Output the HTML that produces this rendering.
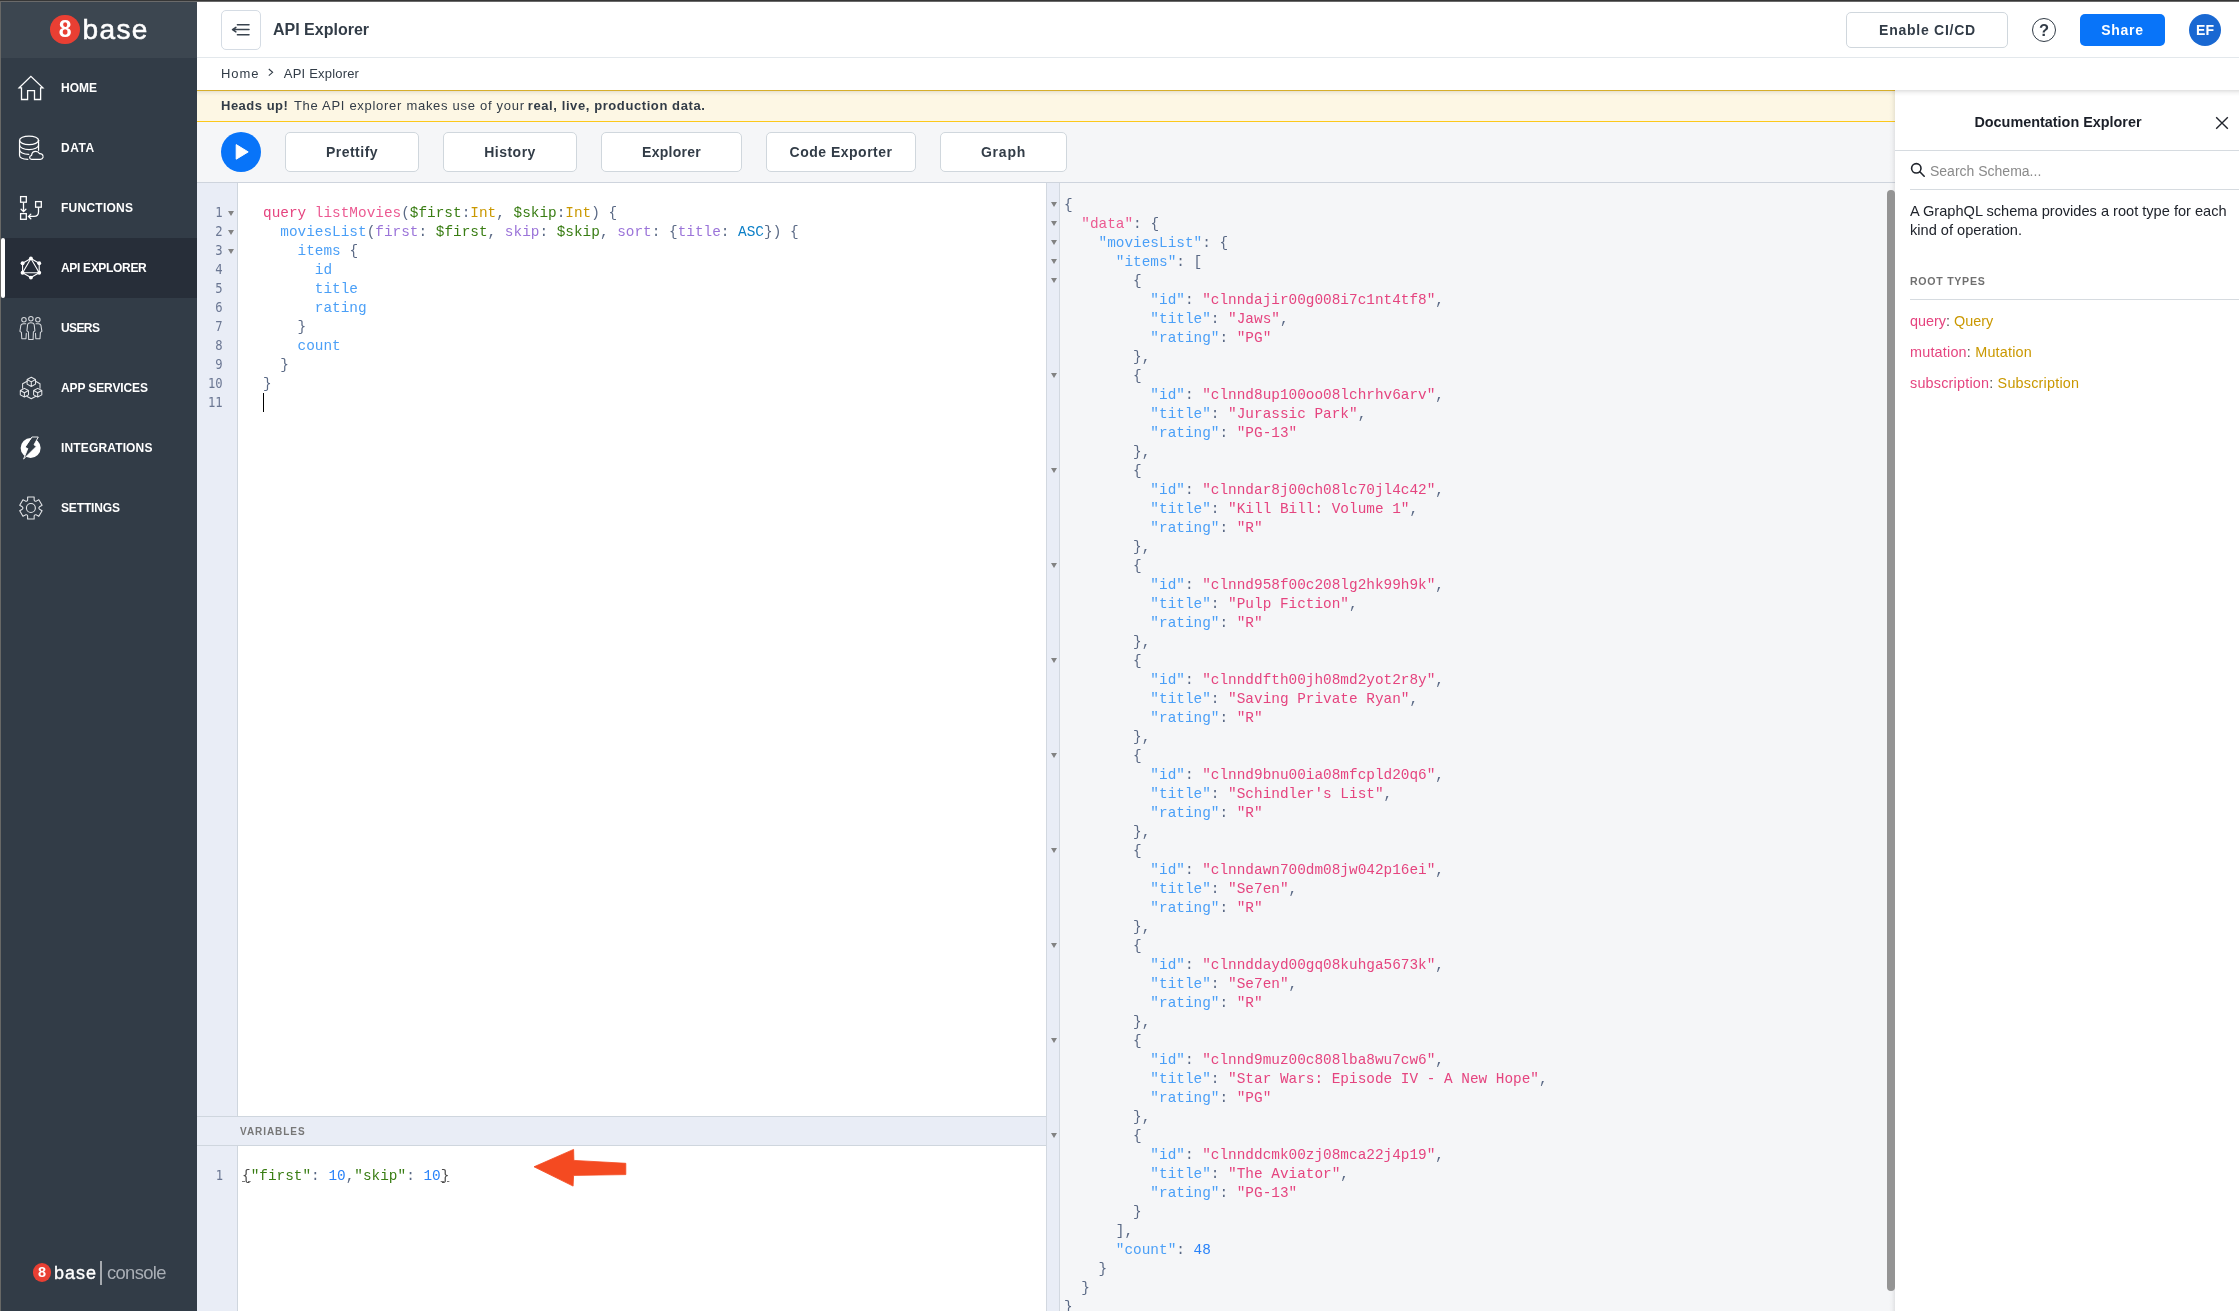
<!DOCTYPE html>
<html lang="en">
<head>
<meta charset="utf-8">
<title>8base Console - API Explorer</title>
<style>
*{box-sizing:border-box;margin:0;padding:0}
html,body{width:2239px;height:1311px;overflow:hidden;background:#fff}
body{position:relative;font-family:"Liberation Sans",sans-serif;color:#323c47;-webkit-font-smoothing:antialiased;will-change:transform}
.abs{position:absolute}
/* window chrome strips */
#topstrip1{left:0;top:0;width:2239px;height:1px;background:#363636;z-index:50}
#topstrip2{left:0;top:1px;width:2239px;height:1px;background:#6a6a6a;z-index:50}
#leftstrip{left:0;top:1px;width:1px;height:1310px;background:#686866;z-index:50}

/* ---------- sidebar ---------- */
#sidebar{left:0;top:0;width:197px;height:1311px;background:#323c47}
#sb-head{left:0;top:0;width:197px;height:58px;background:#3c4650}
.logo-c{border-radius:50%;background:#e93f33;color:#fff;text-align:center;font-weight:bold}
.nav{left:0;width:197px;height:60px}
.nav.active{background:#272e39}
.nav.active:before{content:"";position:absolute;left:1px;top:0;width:4px;height:60px;background:#fff;border-radius:2.5px}
.nav svg{position:absolute;left:18px;top:17px;width:26px;height:26px;overflow:visible}
.nav span{position:absolute;left:61px;top:22px;font-size:12px;line-height:16px;font-weight:bold;color:#fff;white-space:nowrap}

/* ---------- header ---------- */
#header{left:197px;top:0;width:2042px;height:58px;background:#fff;border-bottom:1px solid #e3e8ec}
#toggle{left:24px;top:10px;width:40px;height:40px;border:1px solid #d5dce4;border-radius:5px;background:#fff}
#title{left:76px;top:20px;font-size:16px;line-height:20px;font-weight:bold;color:#323c47;white-space:nowrap}
#cicd{left:1649px;top:12px;width:162px;height:36px;border:1px solid #d0d7dd;border-radius:5px;background:#fff;text-align:center;font-size:14px;line-height:34px;font-weight:bold;color:#323c47;letter-spacing:.75px;padding-left:1px}
#help{left:1835px;top:18px;width:24px;height:24px;border:1.4px solid #323c47;border-radius:50%;text-align:center;font-size:16.5px;line-height:22.6px;font-weight:bold;color:#323c47}
#share{left:1883px;top:14px;width:85px;height:32px;border-radius:5px;background:#0874f9;text-align:center;font-size:14px;line-height:33px;font-weight:bold;color:#fff;letter-spacing:.7px}
#avatar{left:1992px;top:14px;width:32px;height:32px;border-radius:50%;background:#1968d2;text-align:center;font-size:14px;line-height:33px;font-weight:bold;color:#fff}
#crumbs{left:221px;top:65px;font-size:13px;line-height:18px;color:#323c47;white-space:nowrap}
#c1{letter-spacing:.9px}#c3{letter-spacing:.2px}#c2{display:inline-block;width:24.5px;height:10px;position:relative}

/* ---------- banner ---------- */
#banner{left:197px;top:90px;width:1698px;height:32px;background:#fdf7e4;border-top:1px solid #f0c330;border-bottom:1px solid #fcc81b;font-size:13px;line-height:30px;padding-left:24px;color:#323c47;white-space:nowrap}
#banner b{font-weight:bold}
#banner>*{position:absolute;top:0}
#b1{left:24px;letter-spacing:.5px}#b2{left:96.9px;letter-spacing:.71px}#b3{left:330.8px;letter-spacing:.59px}

/* ---------- toolbar ---------- */
#toolbar{left:197px;top:122px;width:1698px;height:61px;background:#f5f6f8;border-bottom:1px solid #ced4dd}
#play{left:24px;top:10px;width:40px;height:40px;border-radius:50%;background:#0874f9}
.tbtn{top:10px;height:40px;border:1px solid #d0d7dd;border-radius:5px;background:#fff;text-align:center;font-size:14px;line-height:38px;font-weight:bold;color:#323c47;letter-spacing:.5px}

/* ---------- editors ---------- */
.code{font-family:"Liberation Mono",monospace;font-size:14.4px;line-height:19px;color:#555}
.ln{height:19px;white-space:pre}
#qgutter{left:197px;top:183px;width:41px;height:933px;background:#e9edf6;border-right:1px solid #cfd6de}
#qedit{left:238px;top:183px;width:808px;height:933px;background:#fff}
.gn{height:19px;font-family:"DejaVu Sans Mono","Liberation Mono",monospace;font-size:13.4px;line-height:19px;color:#6b7793;text-align:right;transform:scaleX(.91);transform-origin:100% 50%}
.fold{position:absolute;left:0;width:0;height:0;border-left:3.1px solid transparent;border-right:3.1px solid transparent;border-top:5.6px solid #828282}
#varhead{left:197px;top:1116px;width:849px;height:30px;background:#e9edf6;border-top:1px solid #cfd6de;border-bottom:1px solid #cfd6de}
#varhead span{position:absolute;left:43px;top:7.6px;font-size:10px;line-height:14px;font-weight:bold;letter-spacing:.95px;color:#777}
#vgutter{left:197px;top:1146px;width:41px;height:165px;background:#e9edf6;border-right:1px solid #cfd6de}
#vedit{left:238px;top:1146px;width:808px;height:165px;background:#fff}
#result{left:1046px;top:183px;width:849px;height:1128px;background:#f5f6f8}
#rgutter{left:0;top:0;width:14px;height:1128px;background:#e9edf6;border-left:1px solid #d2d8e0;border-right:1px solid #d2d8e0}
#scroll{left:1887px;top:190px;width:8px;height:1101px;border-radius:4px;background:#949494;z-index:5}
/* syntax */
.k{color:#e5447f}.d{color:#ec5a92}.v{color:#397d13}.a{color:#ca9800}.p{color:#5a6985}
.pr{color:#4a9ff7}.at{color:#9b74d9}.s2{color:#0b7fc7}.n{color:#2882f9}.s{color:#e5447f}
.vs{color:#397d13}.mb{color:#4a4a4a;text-decoration:underline;text-decoration-thickness:1px;text-decoration-color:#777}

/* ---------- doc explorer ---------- */
#doc{left:1895px;top:90px;width:344px;height:1221px;background:#fff}
#docshadow{left:1889px;top:90px;width:6px;height:1221px;background:linear-gradient(to left,rgba(0,0,0,.08),rgba(0,0,0,.02) 55%,rgba(0,0,0,0))}
#topshadow{left:197px;top:90px;width:2042px;height:6px;background:linear-gradient(to bottom,rgba(0,0,0,.12),rgba(0,0,0,.04) 50%,rgba(0,0,0,0));z-index:20}
#doc-title{left:0;top:0;width:344px;height:61px;border-bottom:1px solid #d6dbe0}
#doc-title span{position:absolute;left:0;width:326px;top:22px;text-align:center;font-size:14.4px;line-height:20px;font-weight:bold;color:#1b1f28}
#search{left:15px;top:61px;width:329px;height:39px;border-bottom:1px solid #d6dbe0}
#search span{position:absolute;left:20px;top:10px;font-size:14px;line-height:20px;color:#8a8a8a}
#doc-desc{left:15px;top:112px;width:329px;font-size:14.6px;line-height:18.5px;color:#20242c;white-space:nowrap}
#roothead{left:15px;top:172px;width:329px;height:38px;border-bottom:1px solid #d6dbe0;font-size:10.6px;line-height:39px;font-weight:bold;letter-spacing:.72px;color:#707070}
.root{left:15px;font-size:14.4px;line-height:20px;white-space:nowrap;color:#555}
.root .f{color:#e5447f}.root .t{color:#ca9800}
</style>
</head>
<body>
<div id="topstrip1" class="abs"></div><div id="topstrip2" class="abs"></div><div id="leftstrip" class="abs"></div>

<!-- ================= SIDEBAR ================= -->
<div id="sidebar" class="abs">
  <div id="sb-head" class="abs"></div>
  <div class="abs logo-c" style="left:50.4px;top:14.7px;width:29.6px;height:29.6px;font-size:23px;line-height:29.6px">8</div>
  <div class="abs" id="logo-t" style="left:82.6px;top:10px;font-size:28px;line-height:40px;color:#fff;letter-spacing:1.35px;-webkit-text-stroke:.55px #fff;white-space:nowrap">base</div>

  <div class="abs nav" style="top:58px"><span>HOME</span></div>
  <div class="abs nav" style="top:118px"><span style="letter-spacing:0.55px">DATA</span></div>
  <div class="abs nav" style="top:178px"><span style="letter-spacing:0.25px">FUNCTIONS</span></div>
  <div class="abs nav active" style="top:238px"><span style="letter-spacing:-0.33px">API EXPLORER</span></div>
  <div class="abs nav" style="top:298px"><span style="letter-spacing:-0.60px">USERS</span></div>
  <div class="abs nav" style="top:358px"><span style="letter-spacing:-0.12px">APP SERVICES</span></div>
  <div class="abs nav" style="top:418px"><span style="letter-spacing:0.15px">INTEGRATIONS</span></div>
  <div class="abs nav" style="top:478px"><span style="letter-spacing:-0.14px">SETTINGS</span></div>

  <svg class="abs" style="left:0;top:0" width="197" height="600" viewBox="0 0 197 600" fill="none" stroke="#fff" stroke-width="1.3" stroke-linejoin="round" stroke-linecap="round">
    <!-- home -->
    <path d="M19.2,87.8 L30.9,76.4 L42.9,87.8 L40.6,87.8 L40.6,99.5 L34.5,99.5 L34.5,90.7 L27.6,90.7 L27.6,99.5 L21.5,99.5 L21.5,87.8 Z" stroke-linejoin="miter"/>
    <!-- data -->
    <g stroke-width="1.25">
      <ellipse cx="29.05" cy="140.3" rx="9.5" ry="4.3"/>
      <path d="M19.55,140.3 V155.2 C19.55,157.4 23,159.1 27.8,159.4"/>
      <path d="M38.55,140.3 V150.3"/>
      <path d="M19.55,145.2 C19.55,147.6 23.8,149.5 29.05,149.5 C34.3,149.5 38.55,147.6 38.55,145.2"/>
      <path d="M19.55,150.1 C19.55,152.3 23.4,154.2 28.7,154.4"/>
      <path d="M43,156.2 C42.9,154.6 41.5,153.5 39.6,153.7 C38.9,152.2 37.5,151.4 35.8,151.4 C33.5,151.4 31.8,153 31.6,155.3 C28.9,155.7 29.1,159.3 31.6,159.3 L40.4,159.3 C41.7,159.3 42.7,158.5 43,157.4"/>
    </g>
    <!-- functions -->
    <g stroke-linejoin="miter">
      <rect x="20.6" y="196.6" width="5.7" height="5.6"/>
      <rect x="35.6" y="201.6" width="5.7" height="5.6"/>
      <rect x="20.6" y="213.6" width="5.7" height="5.7"/>
      <path d="M23.5,202.9 V211.4 M21.1,209.2 L23.5,211.6 L25.9,209.2"/>
      <path d="M38.5,207.8 V212 Q38.5,216.4 34,216.4 H28.6 M30.8,214.1 L28.5,216.4 L30.8,218.7"/>
    </g>
    <!-- api explorer (graphql) -->
    <g stroke-width="1.1">
      <polygon points="30.90,258.40 39.21,263.20 39.21,272.80 30.90,277.60 22.59,272.80 22.59,263.20"/>
      <polygon points="30.90,258.40 39.21,272.80 22.59,272.80"/>
      <g fill="#fff" stroke="none"><circle cx="30.90" cy="258.40" r="1.95"/><circle cx="39.21" cy="263.20" r="1.95"/><circle cx="39.21" cy="272.80" r="1.95"/><circle cx="30.90" cy="277.60" r="1.95"/><circle cx="22.59" cy="272.80" r="1.95"/><circle cx="22.59" cy="263.20" r="1.95"/></g>
    </g>
    <!-- users -->
    <g stroke="#d5d8dc" stroke-width="1.05">
      <circle cx="30.9" cy="318.7" r="2.25"/>
      <circle cx="23.95" cy="319.7" r="2.25"/>
      <circle cx="37.85" cy="319.7" r="2.25"/>
      <path d="M26.9,330.9 L27.5,325.6 C27.5,323.6 29,322.7 30.9,322.7 C32.8,322.7 34.3,323.6 34.3,325.6 L34.9,330.9 L33.4,331.9 L33.1,339.5 L28.7,339.5 L28.4,331.9 Z"/>
      <path d="M25.8,323.8 L23.5,323.8 C21.5,323.8 20.6,325.1 20.6,327 L19.9,331.4 L21.4,332.4 L21.8,338.7 L26.0,338.7 L26.3,333.2"/>
      <path d="M36.0,323.8 L38.3,323.8 C40.3,323.8 41.2,325.1 41.2,327 L41.9,331.4 L40.4,332.4 L40.0,338.7 L35.8,338.7 L35.5,333.2"/>
    </g>
    <!-- app services -->
    <g stroke="#e3e5e8" stroke-width="1.05">
      <path d="M31.30,377.25 L35.50,379.55 L35.50,384.15 L31.30,386.45 L27.10,384.15 L27.10,379.55 Z M27.10,379.55 L31.30,381.85 L35.50,379.55 M31.30,381.85 L31.30,386.45"/><path d="M24.40,388.40 L28.50,390.55 L28.50,394.85 L24.40,397.00 L20.30,394.85 L20.30,390.55 Z M20.30,390.55 L24.40,392.70 L28.50,390.55 M24.40,392.70 L24.40,397.00"/><path d="M37.70,388.40 L41.80,390.55 L41.80,394.85 L37.70,397.00 L33.60,394.85 L33.60,390.55 Z M33.60,390.55 L37.70,392.70 L41.80,390.55 M37.70,392.70 L37.70,397.00"/>
      <path d="M27.1,381.2 L22.6,383.8 L22.6,388.3 M35.5,381.2 L40,383.8 L40,388.3 M26.7,396.2 L31.3,398.8 L35.9,396.2"/>
    </g>
    <!-- integrations -->
    <circle cx="30.65" cy="448" r="10" fill="#fff" stroke="none"/>
    <polygon points="32.3,437 38.3,437 34,444.8 36.3,446.4 23.6,459 27.8,448.6 25.2,447.4" fill="#323c47" stroke="#fff" stroke-width=".9" stroke-linejoin="miter"/>
    <!-- settings -->
    <g stroke="#e3e5e8" stroke-width="1.1">
      <path d="M27.64,499.93 L27.63,496.97 L34.17,496.97 L34.16,499.93 Q34.55,501.68 36.26,501.14 L38.82,499.66 L42.08,505.32 L39.52,506.79 Q38.20,508.00 39.52,509.21 L42.08,510.68 L38.82,516.34 L36.26,514.86 Q34.55,514.32 34.16,516.07 L34.17,519.03 L27.63,519.03 L27.64,516.07 Q27.25,514.32 25.54,514.86 L22.98,516.34 L19.72,510.68 L22.28,509.21 Q23.60,508.00 22.28,506.79 L19.72,505.32 L22.98,499.66 L25.54,501.14 Q27.25,501.68 27.64,499.93 Z"/>
      <circle cx="30.9" cy="508" r="4.45"/>
    </g>
  </svg>

  <div class="abs logo-c" style="left:32.6px;top:1263px;width:18.8px;height:18.8px;font-size:14.5px;line-height:18.8px">8</div>
  <div class="abs" style="left:54.1px;top:1259.6px;font-size:18px;line-height:26px;color:#fff;letter-spacing:.95px;-webkit-text-stroke:.35px #fff;white-space:nowrap">base</div>
  <div class="abs" style="left:100.4px;top:1261px;width:1.4px;height:23.6px;background:#a5a9ae"></div>
  <div class="abs" style="left:106.9px;top:1259.6px;font-size:18.4px;line-height:26px;color:#a9aeb5;letter-spacing:-.62px;white-space:nowrap">console</div>
</div>

<!-- ================= HEADER ================= -->
<div id="header" class="abs">
  <div id="toggle" class="abs">
    <svg class="abs" style="left:8px;top:11px" width="22" height="16" viewBox="0 0 22 16" fill="none" stroke="#39434e" stroke-width="1.5" stroke-linecap="round" stroke-linejoin="round">
      <path d="M7.4,2.7 H19 M2.6,7.6 H19 M7.4,12.7 H19 M5.9,5.3 L2.5,7.6 L5.9,9.9"/>
    </svg>
  </div>
  <div id="title" class="abs">API Explorer</div>
  <div id="cicd" class="abs">Enable CI/CD</div>
  <div id="help" class="abs">?</div>
  <div id="share" class="abs">Share</div>
  <div id="avatar" class="abs">EF</div>
</div>
<div id="crumbs" class="abs"><span id="c1">Home</span><span id="c2"><svg style="position:absolute;left:9.2px;top:0.2px" width="6" height="9" viewBox="0 0 6 9" fill="none" stroke="#323c47" stroke-width="1.1"><path d="M0.8,1 L4.6,4.3 L0.8,7.6"/></svg></span><span id="c3">API Explorer</span></div>

<!-- ================= BANNER ================= -->
<div id="banner" class="abs"><b id="b1">Heads up!</b> <span id="b2">The API explorer makes use of your</span> <b id="b3">real, live, production data.</b></div>

<!-- ================= TOOLBAR ================= -->
<div id="toolbar" class="abs">
  <div id="play" class="abs">
    <svg class="abs" style="left:0;top:0" width="40" height="40" viewBox="0 0 40 40"><path d="M15.2,12.6 L27.2,19.9 L15.2,27.2 Z" fill="#fff" stroke="#fff" stroke-width="1" stroke-linejoin="round"/></svg>
  </div>
  <div class="abs tbtn" style="left:88px;width:134px">Prettify</div>
  <div class="abs tbtn" style="left:246px;width:134px">History</div>
  <div class="abs tbtn" style="left:404px;width:141px;letter-spacing:.25px">Explorer</div>
  <div class="abs tbtn" style="left:569px;width:150px">Code Exporter</div>
  <div class="abs tbtn" style="left:743px;width:127px;letter-spacing:.78px">Graph</div>
</div>

<!-- ================= QUERY EDITOR ================= -->
<div id="qgutter" class="abs">
  <div class="abs" style="left:0;top:20px;width:25.6px">
<div class="gn">1</div>
<div class="gn">2</div>
<div class="gn">3</div>
<div class="gn">4</div>
<div class="gn">5</div>
<div class="gn">6</div>
<div class="gn">7</div>
<div class="gn">8</div>
<div class="gn">9</div>
<div class="gn">10</div>
<div class="gn">11</div>
  </div>
  <div class="abs" style="left:31.3px;top:27.6px;width:8px;height:60px">
<i class="fold" style="top:0px"></i>
<i class="fold" style="top:19px"></i>
<i class="fold" style="top:38px"></i>
  </div>
</div>
<div id="qedit" class="abs">
  <div class="abs code" style="left:25px;top:21px">
<div class="ln"><span class="k">query</span> <span class="d">listMovies</span><span class="p">(</span><span class="v">$first</span><span class="p">:</span><span class="a">Int</span><span class="p">,</span> <span class="v">$skip</span><span class="p">:</span><span class="a">Int</span><span class="p">)</span> <span class="p">{</span></div>
<div class="ln">  <span class="pr">moviesList</span><span class="p">(</span><span class="at">first</span><span class="p">:</span> <span class="v">$first</span><span class="p">,</span> <span class="at">skip</span><span class="p">:</span> <span class="v">$skip</span><span class="p">,</span> <span class="at">sort</span><span class="p">:</span> <span class="p">{</span><span class="at">title</span><span class="p">:</span> <span class="s2">ASC</span><span class="p">}</span><span class="p">)</span> <span class="p">{</span></div>
<div class="ln">    <span class="pr">items</span> <span class="p">{</span></div>
<div class="ln">      <span class="pr">id</span></div>
<div class="ln">      <span class="pr">title</span></div>
<div class="ln">      <span class="pr">rating</span></div>
<div class="ln">    <span class="p">}</span></div>
<div class="ln">    <span class="pr">count</span></div>
<div class="ln">  <span class="p">}</span></div>
<div class="ln"><span class="p">}</span></div>
<div class="ln">&nbsp;</div>
  </div>
  <div class="abs" style="left:25px;top:210px;width:1px;height:19px;background:#000"></div>
</div>

<!-- ================= VARIABLES ================= -->
<div id="varhead" class="abs"><span>VARIABLES</span></div>
<div id="vgutter" class="abs"><div class="gn abs" style="left:0;top:20px;width:26px">1</div></div>
<div id="vedit" class="abs">
  <div class="abs code" style="left:4px;top:20.5px"><div class="ln"><span class="mb">{</span><span class="vs">"first"</span><span class="p">:</span> <span class="n">10</span><span class="p">,</span><span class="vs">"skip"</span><span class="p">:</span> <span class="n">10</span><span class="mb">}</span></div></div>
  
</div>

<!-- ================= RESULT ================= -->
<div id="result" class="abs">
  <div id="rgutter" class="abs">
    <div class="abs" style="left:3.8px;top:19.3px;width:8px;height:10px">
<i class="fold" style="top:0px"></i>
<i class="fold" style="top:19px"></i>
<i class="fold" style="top:38px"></i>
<i class="fold" style="top:57px"></i>
<i class="fold" style="top:76px"></i>
<i class="fold" style="top:171px"></i>
<i class="fold" style="top:266px"></i>
<i class="fold" style="top:361px"></i>
<i class="fold" style="top:456px"></i>
<i class="fold" style="top:551px"></i>
<i class="fold" style="top:646px"></i>
<i class="fold" style="top:741px"></i>
<i class="fold" style="top:836px"></i>
<i class="fold" style="top:931px"></i>
    </div>
  </div>
  <div class="abs code" style="left:18px;top:12.5px">
<div class="ln"><span class="p">{</span></div>
<div class="ln">  <span class="d">"data"</span><span class="p">:</span> <span class="p">{</span></div>
<div class="ln">    <span class="pr">"moviesList"</span><span class="p">:</span> <span class="p">{</span></div>
<div class="ln">      <span class="pr">"items"</span><span class="p">:</span> <span class="p">[</span></div>
<div class="ln">        <span class="p">{</span></div>
<div class="ln">          <span class="pr">"id"</span><span class="p">:</span> <span class="s">"clnndajir00g008i7c1nt4tf8"</span><span class="p">,</span></div>
<div class="ln">          <span class="pr">"title"</span><span class="p">:</span> <span class="s">"Jaws"</span><span class="p">,</span></div>
<div class="ln">          <span class="pr">"rating"</span><span class="p">:</span> <span class="s">"PG"</span></div>
<div class="ln">        <span class="p">},</span></div>
<div class="ln">        <span class="p">{</span></div>
<div class="ln">          <span class="pr">"id"</span><span class="p">:</span> <span class="s">"clnnd8up100oo08lchrhv6arv"</span><span class="p">,</span></div>
<div class="ln">          <span class="pr">"title"</span><span class="p">:</span> <span class="s">"Jurassic Park"</span><span class="p">,</span></div>
<div class="ln">          <span class="pr">"rating"</span><span class="p">:</span> <span class="s">"PG-13"</span></div>
<div class="ln">        <span class="p">},</span></div>
<div class="ln">        <span class="p">{</span></div>
<div class="ln">          <span class="pr">"id"</span><span class="p">:</span> <span class="s">"clnndar8j00ch08lc70jl4c42"</span><span class="p">,</span></div>
<div class="ln">          <span class="pr">"title"</span><span class="p">:</span> <span class="s">"Kill Bill: Volume 1"</span><span class="p">,</span></div>
<div class="ln">          <span class="pr">"rating"</span><span class="p">:</span> <span class="s">"R"</span></div>
<div class="ln">        <span class="p">},</span></div>
<div class="ln">        <span class="p">{</span></div>
<div class="ln">          <span class="pr">"id"</span><span class="p">:</span> <span class="s">"clnnd958f00c208lg2hk99h9k"</span><span class="p">,</span></div>
<div class="ln">          <span class="pr">"title"</span><span class="p">:</span> <span class="s">"Pulp Fiction"</span><span class="p">,</span></div>
<div class="ln">          <span class="pr">"rating"</span><span class="p">:</span> <span class="s">"R"</span></div>
<div class="ln">        <span class="p">},</span></div>
<div class="ln">        <span class="p">{</span></div>
<div class="ln">          <span class="pr">"id"</span><span class="p">:</span> <span class="s">"clnnddfth00jh08md2yot2r8y"</span><span class="p">,</span></div>
<div class="ln">          <span class="pr">"title"</span><span class="p">:</span> <span class="s">"Saving Private Ryan"</span><span class="p">,</span></div>
<div class="ln">          <span class="pr">"rating"</span><span class="p">:</span> <span class="s">"R"</span></div>
<div class="ln">        <span class="p">},</span></div>
<div class="ln">        <span class="p">{</span></div>
<div class="ln">          <span class="pr">"id"</span><span class="p">:</span> <span class="s">"clnnd9bnu00ia08mfcpld20q6"</span><span class="p">,</span></div>
<div class="ln">          <span class="pr">"title"</span><span class="p">:</span> <span class="s">"Schindler's List"</span><span class="p">,</span></div>
<div class="ln">          <span class="pr">"rating"</span><span class="p">:</span> <span class="s">"R"</span></div>
<div class="ln">        <span class="p">},</span></div>
<div class="ln">        <span class="p">{</span></div>
<div class="ln">          <span class="pr">"id"</span><span class="p">:</span> <span class="s">"clnndawn700dm08jw042p16ei"</span><span class="p">,</span></div>
<div class="ln">          <span class="pr">"title"</span><span class="p">:</span> <span class="s">"Se7en"</span><span class="p">,</span></div>
<div class="ln">          <span class="pr">"rating"</span><span class="p">:</span> <span class="s">"R"</span></div>
<div class="ln">        <span class="p">},</span></div>
<div class="ln">        <span class="p">{</span></div>
<div class="ln">          <span class="pr">"id"</span><span class="p">:</span> <span class="s">"clnnddayd00gq08kuhga5673k"</span><span class="p">,</span></div>
<div class="ln">          <span class="pr">"title"</span><span class="p">:</span> <span class="s">"Se7en"</span><span class="p">,</span></div>
<div class="ln">          <span class="pr">"rating"</span><span class="p">:</span> <span class="s">"R"</span></div>
<div class="ln">        <span class="p">},</span></div>
<div class="ln">        <span class="p">{</span></div>
<div class="ln">          <span class="pr">"id"</span><span class="p">:</span> <span class="s">"clnnd9muz00c808lba8wu7cw6"</span><span class="p">,</span></div>
<div class="ln">          <span class="pr">"title"</span><span class="p">:</span> <span class="s">"Star Wars: Episode IV - A New Hope"</span><span class="p">,</span></div>
<div class="ln">          <span class="pr">"rating"</span><span class="p">:</span> <span class="s">"PG"</span></div>
<div class="ln">        <span class="p">},</span></div>
<div class="ln">        <span class="p">{</span></div>
<div class="ln">          <span class="pr">"id"</span><span class="p">:</span> <span class="s">"clnnddcmk00zj08mca22j4p19"</span><span class="p">,</span></div>
<div class="ln">          <span class="pr">"title"</span><span class="p">:</span> <span class="s">"The Aviator"</span><span class="p">,</span></div>
<div class="ln">          <span class="pr">"rating"</span><span class="p">:</span> <span class="s">"PG-13"</span></div>
<div class="ln">        <span class="p">}</span></div>
<div class="ln">      <span class="p">],</span></div>
<div class="ln">      <span class="pr">"count"</span><span class="p">:</span> <span class="n">48</span></div>
<div class="ln">    <span class="p">}</span></div>
<div class="ln">  <span class="p">}</span></div>
<div class="ln"><span class="p">}</span></div>
  </div>
</div>
<div id="scroll" class="abs"></div>
<svg class="abs" style="left:530px;top:1145px" width="100" height="45" viewBox="0 0 100 45"><path d="M4,21.8 L43.6,4.4 L43.9,15.4 L95.8,18.3 L95.8,29.6 L43.6,30.4 L43.1,41.1 Z" fill="#f44a21" stroke="#f44a21" stroke-width=".8" stroke-linejoin="round"/></svg>

<!-- ================= DOC EXPLORER ================= -->
<div id="docshadow" class="abs"></div>
<div id="doc" class="abs">
  <div id="doc-title" class="abs"><span>Documentation Explorer</span>
    <svg class="abs" style="left:320px;top:26px" width="14" height="14" viewBox="0 0 14 14" fill="none" stroke="#20242c" stroke-width="1.4"><path d="M1.2,1.2 L12.8,12.8 M12.8,1.2 L1.2,12.8"/></svg>
  </div>
  <div id="search" class="abs">
    <svg class="abs" style="left:-.4px;top:11px" width="16" height="16" viewBox="0 0 16 16" fill="none" stroke="#20242c" stroke-width="1.6" stroke-linecap="round"><circle cx="6.3" cy="6.3" r="4.7"/><path d="M9.8,9.8 L14.2,14.2"/></svg>
    <span>Search Schema...</span>
  </div>
  <div id="doc-desc" class="abs">A GraphQL schema provides a root type for each<br>kind of operation.</div>
  <div id="roothead" class="abs">ROOT TYPES</div>
  <div class="abs root" style="top:221px"><span class="f">query</span>: <span class="t">Query</span></div>
  <div class="abs root" style="top:252px;letter-spacing:.2px"><span class="f">mutation</span>: <span class="t">Mutation</span></div>
  <div class="abs root" style="top:283px;letter-spacing:.2px"><span class="f">subscription</span>: <span class="t">Subscription</span></div>
</div>
<div id="topshadow" class="abs"></div>

</body>
</html>
